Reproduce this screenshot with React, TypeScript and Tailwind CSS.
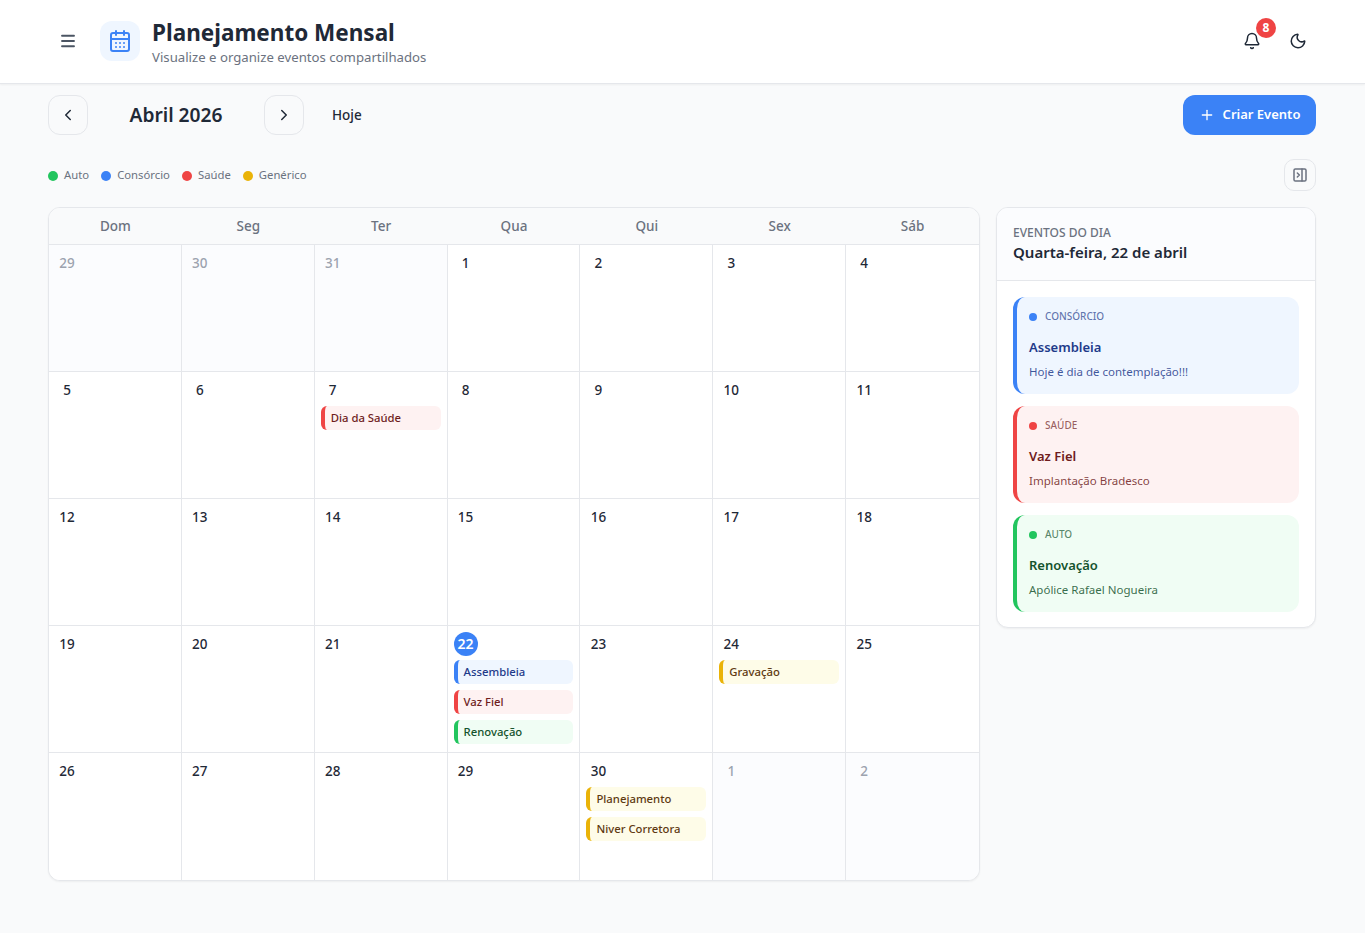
import React from "react";
import { Menu, CalendarDays, ChevronLeft, ChevronRight, Bell, Moon, Plus, PanelRightClose } from "lucide-react";

type Kind = "auto" | "cons" | "saude" | "gen";

const chip: Record<Kind, string> = {
  auto: "bg-[#f0fdf4] border-[#22c55e] text-[#14532d]",
  cons: "bg-[#eff6ff] border-[#3b82f6] text-[#1e3a8a]",
  saude: "bg-[#fef2f2] border-[#ef4444] text-[#6f1d1d]",
  gen: "bg-[#fefce8] border-[#eab308] text-[#5f3a12]",
};

const dotColor: Record<Kind, string> = {
  auto: "bg-[#22c55e]",
  cons: "bg-[#3b82f6]",
  saude: "bg-[#ef4444]",
  gen: "bg-[#eab308]",
};

const weekdays = ["Dom", "Seg", "Ter", "Qua", "Qui", "Sex", "Sáb"];

type Ev = { t: string; k: Kind };
type Cell = { d: number; out?: boolean; today?: boolean; ev?: Ev[] };

const cells: Cell[] = [
  { d: 29, out: true }, { d: 30, out: true }, { d: 31, out: true }, { d: 1 }, { d: 2 }, { d: 3 }, { d: 4 },
  { d: 5 }, { d: 6 }, { d: 7, ev: [{ t: "Dia da Saúde", k: "saude" }] }, { d: 8 }, { d: 9 }, { d: 10 }, { d: 11 },
  { d: 12 }, { d: 13 }, { d: 14 }, { d: 15 }, { d: 16 }, { d: 17 }, { d: 18 },
  { d: 19 }, { d: 20 }, { d: 21 },
  { d: 22, today: true, ev: [{ t: "Assembleia", k: "cons" }, { t: "Vaz Fiel", k: "saude" }, { t: "Renovação", k: "auto" }] },
  { d: 23 }, { d: 24, ev: [{ t: "Gravação", k: "gen" }] }, { d: 25 },
  { d: 26 }, { d: 27 }, { d: 28 }, { d: 29 },
  { d: 30, ev: [{ t: "Planejamento", k: "gen" }, { t: "Niver Corretora", k: "gen" }] },
  { d: 1, out: true }, { d: 2, out: true },
];

const cards: { k: Kind; label: string; title: string; desc: string; bg: string; lab: string; ti: string; de: string }[] = [
  { k: "cons", label: "CONSÓRCIO", title: "Assembleia", desc: "Hoje é dia de contemplação!!!", bg: "bg-[#eff6ff] border-[#3b82f6]", lab: "text-[#1e3a8a]/70", ti: "text-[#1e3a8a]", de: "text-[#1e3a8a]/85" },
  { k: "saude", label: "SAÚDE", title: "Vaz Fiel", desc: "Implantação Bradesco", bg: "bg-[#fef2f2] border-[#ef4444]", lab: "text-[#6f1d1d]/70", ti: "text-[#6f1d1d]", de: "text-[#6f1d1d]/85" },
  { k: "auto", label: "AUTO", title: "Renovação", desc: "Apólice Rafael Nogueira", bg: "bg-[#f0fdf4] border-[#22c55e]", lab: "text-[#14532d]/70", ti: "text-[#14532d]", de: "text-[#14532d]/85" },
];

const legend: { k: Kind; t: string }[] = [
  { k: "auto", t: "Auto" },
  { k: "cons", t: "Consórcio" },
  { k: "saude", t: "Saúde" },
  { k: "gen", t: "Genérico" },
];

export default function App() {
  return (
    <div className="min-h-[933px] bg-[#f9fafb] font-['Noto_Sans',sans-serif] text-[#1f2937]">
      <header className="h-[84px] bg-white border-b border-[#e5e7eb] shadow-xs pl-[48px] pr-[47px] pb-[2px] flex items-center justify-between">
        <div className="flex items-center">
          <button className="w-10 h-10 flex items-center justify-center text-[#4b5563]">
            <Menu size={18} strokeWidth={2.5} />
          </button>
          <div className="ml-3 w-10 h-10 rounded-xl bg-[#eff6ff] flex items-center justify-center text-[#3b82f6]">
            <CalendarDays size={24} strokeWidth={2} />
          </div>
          <div className="ml-3">
            <div className="text-[22.5px] leading-[28px] font-bold text-[#1f2937] pt-[5px]">Planejamento Mensal</div>
            <div className="text-[13.2px] leading-5 text-[#6b7280]">Visualize e organize eventos compartilhados</div>
          </div>
        </div>
        <div className="flex items-center gap-[6px]">
          <button className="relative w-10 h-10 flex items-center justify-center text-[#1f2937]">
            <Bell size={18} strokeWidth={2} />
            <span className="absolute top-[-3px] right-[-4px] w-5 h-5 rounded-full bg-[#ef4444] text-white text-xs font-bold flex items-center justify-center">8</span>
          </button>
          <button className="w-10 h-10 flex items-center justify-center text-[#1f2937]">
            <Moon size={18} strokeWidth={2} />
          </button>
        </div>
      </header>

      <main className="pl-12 pt-[11px] w-[1316px]">
        <div className="flex items-center justify-between h-10">
          <div className="flex items-center">
            <button className="w-10 h-10 rounded-xl border border-[#e5e7eb] flex items-center justify-center text-[#1f2937]">
              <ChevronLeft size={18} strokeWidth={2} />
            </button>
            <div className="w-[176px] text-center text-[19.2px] font-semibold">Abril 2026</div>
            <button className="w-10 h-10 rounded-xl border border-[#e5e7eb] flex items-center justify-center text-[#1f2937]">
              <ChevronRight size={18} strokeWidth={2} />
            </button>
            <button className="ml-[28px] text-[13.5px] font-medium">Hoje</button>
          </div>
          <button className="h-10 w-[133px] rounded-xl bg-[#3b82f6] text-white text-[13px] font-semibold flex items-center justify-center gap-2">
            <Plus size={16} strokeWidth={2} />
            Criar Evento
          </button>
        </div>

        <div className="mt-6 h-8 flex items-center justify-between">
          <div className="flex items-center gap-3 pt-px">
            {legend.map((l) => (
              <div key={l.t} className="flex items-center gap-[6px] text-[11.3px] text-[#6b7280]">
                <span className={"w-[10px] h-[10px] rounded-full " + dotColor[l.k]} />
                {l.t}
              </div>
            ))}
          </div>
          <button className="w-8 h-8 rounded-[10px] border border-[#e5e7eb] flex items-center justify-center text-[#6b7280]">
            <PanelRightClose size={16} strokeWidth={2.25} />
          </button>
        </div>

        <div className="mt-4 flex items-start gap-4">
          <div className="w-[932px] rounded-xl border border-[#e5e7eb] bg-white overflow-hidden shadow-xs">
            <div className="grid grid-cols-7 h-[37px] bg-[#f9fafb] border-b border-[#e5e7eb]">
              {weekdays.map((w) => (
                <div key={w} className="flex items-center justify-center pt-px text-[13.5px] font-medium text-[#6b7280]">{w}</div>
              ))}
            </div>
            <div className="grid grid-cols-7">
              {cells.map((c, i) => (
                <div
                  key={i}
                  className={
                    "h-[127px] p-[6px] border-[#e5e7eb] flex flex-col gap-1 " +
                    (i % 7 !== 6 ? "border-r " : "") +
                    (i < 28 ? "border-b " : "") +
                    (c.out ? "bg-[#fbfcfe]" : "bg-white")
                  }
                >
                  {c.today ? (
                    <div className="w-6 h-6 rounded-full bg-[#3b82f6] text-white text-sm font-semibold flex items-center justify-center shrink-0">{c.d}</div>
                  ) : (
                    <div className={"w-6 h-6 text-[13.5px] font-medium flex items-center justify-center shrink-0 " + (c.out ? "text-[#9ca3af]" : "text-[#1f2937]")}>{c.d}</div>
                  )}
                  <div className="flex flex-col gap-[6px]">
                    {c.ev?.map((e) => (
                      <div key={e.t} className={"h-6 rounded-md border-l-4 pl-[6px] pt-px text-[11.3px] font-medium flex items-center " + chip[e.k]}>
                        {e.t}
                      </div>
                    ))}
                  </div>
                </div>
              ))}
            </div>
          </div>

          <aside className="w-[320px] rounded-xl border border-[#e5e7eb] bg-white overflow-hidden shadow-xs">
            <div className="h-[73px] bg-[#fbfcfe] border-b border-[#e5e7eb] px-4 pt-[17px]">
              <div className="text-xs leading-4 font-medium text-[#6b7280]">EVENTOS DO DIA</div>
              <div className="text-[15px] leading-[23px] font-semibold text-[#1f2937]">Quarta-feira, 22 de abril</div>
            </div>
            <div className="pt-4 px-4 pb-[15px] flex flex-col gap-3">
              {cards.map((c) => (
                <div key={c.title} className={"h-[97px] rounded-xl border-l-4 pl-3 pr-3 pt-3 " + c.bg}>
                  <div className="flex items-center gap-2 h-[15px]">
                    <span className={"w-2 h-2 rounded-full " + dotColor[c.k]} />
                    <span className={"text-[10px] font-medium " + c.lab}>{c.label}</span>
                  </div>
                  <div className={"mt-[13px] text-[13px] leading-5 font-semibold " + c.ti}>{c.title}</div>
                  <div className={"mt-[7px] text-[11.5px] leading-4 " + c.de}>{c.desc}</div>
                </div>
              ))}
            </div>
          </aside>
        </div>
      </main>
    </div>
  );
}
